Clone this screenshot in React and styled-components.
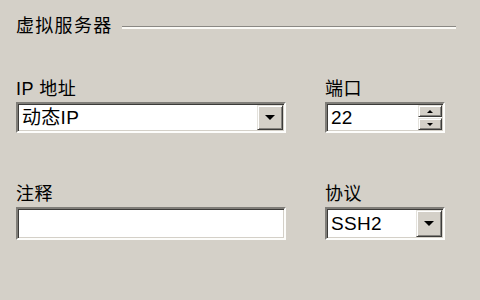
import React from "react";
import styled, { createGlobalStyle } from "styled-components";

const Global = createGlobalStyle`
  html, body { margin: 0; padding: 0; background: #d4d0c8; }
  body { width: 480px; height: 300px; overflow: hidden; }
`;

const Page = styled.div`
  box-sizing: border-box;
  width: 480px;
  height: 300px;
  padding: 15px 24px 0 16px;
  background: #d4d0c8;
  font-family: "Liberation Sans", "Noto Sans CJK SC", sans-serif;
  font-size: 18px;
  color: #000;
`;

const Header = styled.div`
  display: flex;
  align-items: center;
  gap: 9px;
  height: 22px;
`;

const Title = styled.span`
  line-height: 22px;
  letter-spacing: 1.3px;
  white-space: nowrap;
`;

const Rule = styled.div`
  flex: 1;
  height: 0;
  border-top: 1px solid #8a8884;
  border-bottom: 2px solid #fbfaf6;
  margin-top: 3px;
`;

const Grid = styled.div`
  display: grid;
  grid-template-columns: 270px 120px;
  column-gap: 39px;
  row-gap: 51px;
  margin-top: 42px;
`;

const Field = styled.div`
  display: flex;
  flex-direction: column;
  gap: 3px;
`;

const Label = styled.span`
  line-height: 20px;
  letter-spacing: 0.5px;
  white-space: pre;
`;

const Sunken = styled.div`
  box-sizing: border-box;
  height: ${(p) => p.$h}px;
  display: flex;
  align-items: stretch;
  background: #fff;
  border-top: 2px solid #7f7d78;
  border-left: 2px solid #7f7d78;
  border-bottom: 2px solid #fdfdfb;
  border-right: 2px solid #fdfdfb;
  box-shadow: inset 1px 1px 0 #3c3b39, inset -1px -1px 0 #d4d0c8;
  padding: 1px;
`;

const Value = styled.span`
  flex: 1;
  display: flex;
  align-items: center;
  padding-left: 3px;
  line-height: 20px;
  font-size: 19px;
  letter-spacing: 0.3px;
`;

const RaisedButton = styled.div`
  box-sizing: border-box;
  width: ${(p) => p.$w}px;
  flex: ${(p) => (p.$grow ? 1 : "none")};
  display: flex;
  align-items: center;
  justify-content: center;
  background: #d4d0c8;
  border-top: 1px solid #e4e2dc;
  border-left: 1px solid #e4e2dc;
  border-bottom: 1px solid #3c3b39;
  border-right: 1px solid #3c3b39;
  box-shadow: inset 1px 1px 0 #ffffff, inset -1px -1px 0 #85837e;
`;

const SpinColumn = styled.div`
  display: flex;
  flex-direction: column;
  gap: 1px;
  width: 24px;
`;

const Triangle = ({ size, up }) => (
  <svg width={size * 2} height={size} viewBox={`0 0 ${size * 2} ${size}`}>
    <polygon
      points={
        up
          ? `${size},0 ${size * 2},${size} 0,${size}`
          : `0,0 ${size * 2},0 ${size},${size}`
      }
      fill="#000"
    />
  </svg>
);

function Combo({ value, height }) {
  return (
    <Sunken $h={height}>
      <Value>{value}</Value>
      <RaisedButton $w={26}>
        <Triangle size={5} />
      </RaisedButton>
    </Sunken>
  );
}

export default function App() {
  return (
    <>
      <Global />
      <Page>
        <Header>
          <Title>虚拟服务器</Title>
          <Rule />
        </Header>
        <Grid>
          <Field>
            <Label>IP 地址</Label>
            <Combo value="动态IP" height={31} />
          </Field>
          <Field>
            <Label>端口</Label>
            <Sunken $h={31}>
              <Value>22</Value>
              <SpinColumn>
                <RaisedButton $grow>
                  <Triangle size={3} up />
                </RaisedButton>
                <RaisedButton $grow>
                  <Triangle size={3} />
                </RaisedButton>
              </SpinColumn>
            </Sunken>
          </Field>
          <Field>
            <Label>注释</Label>
            <Sunken $h={33} />
          </Field>
          <Field>
            <Label>协议</Label>
            <Combo value="SSH2" height={33} />
          </Field>
        </Grid>
      </Page>
    </>
  );
}
